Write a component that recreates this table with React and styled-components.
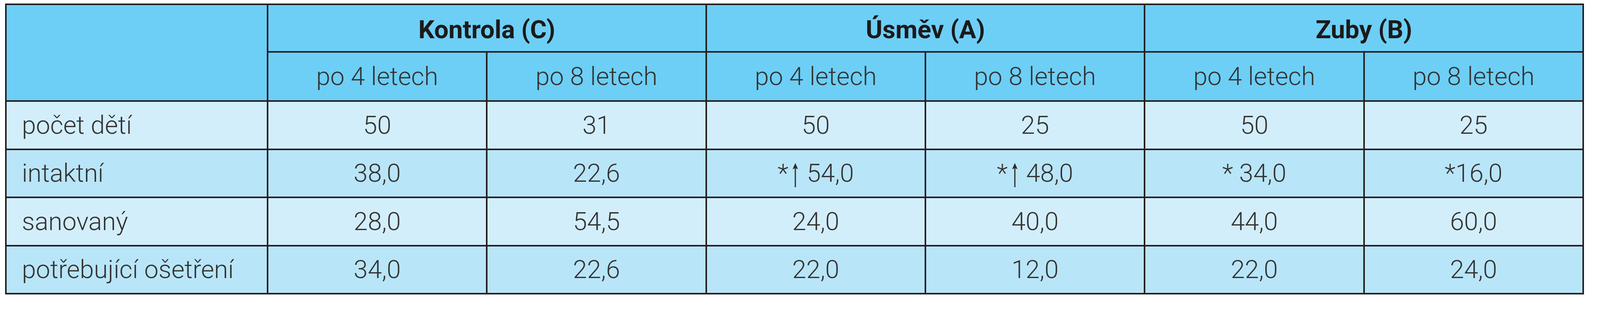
import React from "react";
import styled, { createGlobalStyle } from "styled-components";

const GlobalStyle = createGlobalStyle`
	html, body {
		margin: 0;
		padding: 0;
		background: #ffffff;
	}
	body {
		font-family: Roboto, "Liberation Sans", Arial, sans-serif;
	}
`;

const Page = styled.div`
	padding: 9px 0 0 13px;
`;

const Table = styled.table`
	width: 4038px;
	border-collapse: collapse;
	table-layout: fixed;
	border: 4px solid #231f20;
	font-size: 65px;
	font-weight: 300;
	color: #333333;
`;

const Col = styled.col`
	width: ${(props) => props.$w}px;
`;

const Row = styled.tr`
	height: ${(props) => props.$h || 123.5}px;
	background: ${(props) =>
		props.$tone === "head"
			? "#6dcff6"
			: props.$tone === "light"
			? "#d3eefb"
			: "#b9e5f9"};
`;

const HeadCell = styled.th`
	border: 4px solid #231f20;
	padding: 0;
	text-align: center;
	vertical-align: middle;
	font-weight: ${(props) => (props.$bold ? 700 : 300)};
	color: ${(props) => (props.$bold ? "#1c1a1b" : "#333333")};
	padding-top: ${(props) => (props.$bold ? "8px" : "0")};
`;

const Cell = styled.td`
	border: 4px solid #231f20;
	padding: 0;
	text-align: center;
	vertical-align: middle;
	white-space: nowrap;
`;

const LabelCell = styled(Cell)`
	text-align: left;
	padding-left: 39px;
`;

const ArrowIcon = styled.svg`
	display: inline-block;
	width: 20px;
	height: 63px;
	vertical-align: -14px;
	margin: 0 19px 0 8px;
`;

const Arrow = () => (
	<ArrowIcon viewBox="0 0 20 63">
		<path d="M10 1 L17 17 L11.5 14.5 L11.5 63 L8.5 63 L8.5 14.5 L3 17 Z" fill="#2b2b2b" />
	</ArrowIcon>
);

const rows = [
	{ label: "počet dětí", tone: "light", values: ["50", "31", "50", "25", "50", "25"] },
	{
		label: "intaktní",
		tone: "mid",
		values: ["38,0", "22,6", "up:54,0", "up:48,0", "* 34,0", "*16,0"],
	},
	{ label: "sanovaný", tone: "light", values: ["28,0", "54,5", "24,0", "40,0", "44,0", "60,0"] },
	{
		label: "potřebující ošetření",
		tone: "mid",
		values: ["34,0", "22,6", "22,0", "12,0", "22,0", "24,0"],
	},
];

const groups = ["Kontrola (C)", "Úsměv (A)", "Zuby (B)"];

// "up:" marks a value with the significant-increase arrow
const renderValue = (v) => {
	if (v.startsWith("up:")) {
		return (
			<>
				*<Arrow />
				{v.slice(3)}
			</>
		);
	}
	return v;
};

const App = () => {
	return (
		<Page>
			<GlobalStyle />
			<Table>
				<colgroup>
					<Col $w={670} />
					{[0, 1, 2, 3, 4, 5].map((i) => (
						<Col key={i} $w={561.33} />
					))}
				</colgroup>
				<thead>
					<Row $tone="head" $h={121.5}>
						<HeadCell rowSpan={2} />
						{groups.map((g) => (
							<HeadCell key={g} colSpan={2} $bold>
								{g}
							</HeadCell>
						))}
					</Row>
					<Row $tone="head" $h={126.5}>
						{groups.map((g) => (
							<React.Fragment key={g}>
								<HeadCell>po 4 letech</HeadCell>
								<HeadCell>po 8 letech</HeadCell>
							</React.Fragment>
						))}
					</Row>
				</thead>
				<tbody>
					{rows.map((r) => (
						<Row key={r.label} $tone={r.tone}>
							<LabelCell>{r.label}</LabelCell>
							{r.values.map((v, i) => (
								<Cell key={i}>{renderValue(v)}</Cell>
							))}
						</Row>
					))}
				</tbody>
			</Table>
		</Page>
	);
};

export default App;
